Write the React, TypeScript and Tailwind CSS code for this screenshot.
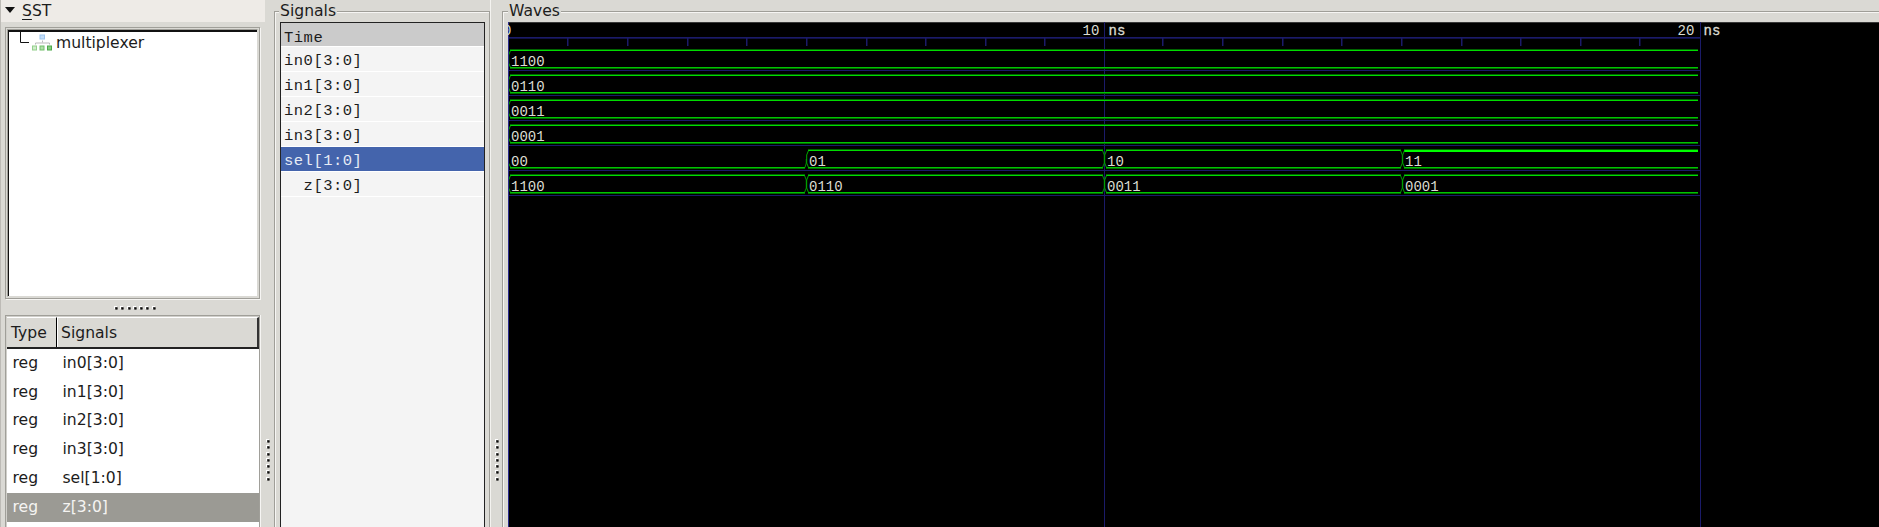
import React from "react";

const LEFT_ROWS = ["in0[3:0]", "in1[3:0]", "in2[3:0]", "in3[3:0]", "sel[1:0]", "z[3:0]"];
const NAMES = ["in0[3:0]", "in1[3:0]", "in2[3:0]", "in3[3:0]", "sel[1:0]", "  z[3:0]"];

type Segment = { from: number; to: number; value: string };
const END = 1191;
const full = (value: string): Segment[] => [{ from: 1, to: END, value }];
const WAVES: Segment[][] = [
  full("1100"),
  full("0110"),
  full("0011"),
  full("0001"),
  [
    { from: 1, to: 299, value: "00" },
    { from: 299, to: 597, value: "01" },
    { from: 597, to: 895, value: "10" },
    { from: 895, to: END, value: "11" },
  ],
  [
    { from: 1, to: 299, value: "1100" },
    { from: 299, to: 597, value: "0110" },
    { from: 597, to: 895, value: "0011" },
    { from: 895, to: END, value: "0001" },
  ],
];
const TICKS = [60, 120, 180, 239, 299, 359, 418, 478, 537, 655, 715, 775, 834, 894, 954, 1013, 1073, 1132];

function Dots({ vertical }: { vertical?: boolean }) {
  return (
    <div className={vertical ? "flex flex-col gap-[2.25px]" : "flex gap-[2.25px]"}>
      {Array.from({ length: 7 }, (_, i) => (
        <svg key={i} width="4" height="4" viewBox="0 0 4 4">
          <rect width="3" height="3" fill="#fff" />
          <rect x="1" y="1" width="2.500" height="2.500" fill="#6b6a67" />
          <rect x="1.500" y="1.500" width="2" height="2" fill="#0c0c0c" />
        </svg>
      ))}
    </div>
  );
}

function Frame({ title, open, children }: { title: string; open?: boolean; children: React.ReactNode }) {
  return (
    <section
      className={
        "relative mt-[11px] flex min-w-0 flex-1 border-t border-l border-[#9f9e98] " + (open ? "" : "border-r")
      }
    >
      <div
        className={
          "flex min-w-0 flex-1 border-t border-l border-[#f6f5f3] pt-[9px] " + (open ? "pl-[4px]" : "px-[4px]")
        }
      >
        {children}
      </div>
      <h2
        className={
          "absolute -top-[11px] bg-[#dad9d4] px-px text-[15.6px] leading-[20px] " + (open ? "left-[5px]" : "left-[4px]")
        }
      >
        {title}
      </h2>
    </section>
  );
}

function TreeIcon() {
  return (
    <svg width="21" height="17" viewBox="0 0 21 17" className="mt-[2px] ml-[3px] shrink-0">
      <path d="M10.500 6.500v2M3.500 10.500V9h14v1.500" fill="none" stroke="#b9b9b9" />
      <rect x="8" y="1" width="4.500" height="4" fill="#c4def8" stroke="#9cc4ee" />
      <rect x=".5" y="12" width="4" height="4" fill="#d0ecca" stroke="#93cf8c" />
      <rect x="8" y="12" width="4" height="4" fill="#b0e0a9" stroke="#72c06b" />
      <rect x="15.500" y="12" width="4" height="4" fill="#86cd80" stroke="#4da94a" />
    </svg>
  );
}

function Bus({ seg, y, binary }: { seg: Segment; y: number; binary: boolean }) {
  const a = seg.from;
  const last = seg.to === END;
  const b = last ? seg.to - 1 : seg.to - 2;
  const low = binary && seg.value === "00";
  const high = binary && seg.value === "11";
  const x = a + 1;
  return (
    <g>
      {!low && <rect x={x} y={y - 1} width={b - x} height="1" fill="#006400" />}
      {!low && <rect x={x} y={y} width={b - x} height="1" fill="#00dc00" />}
      {high && <rect x={x} y={y} width={b - x} height="2" fill="#00ff00" />}
      <rect x={x} y={y + 17} width={b - x} height="1" fill="#00c400" />
      <rect x={x} y={y + 18} width={b - x} height="1" fill="#006e00" />
      <path
        d={
          low
            ? `M${a - 0.5} ${y + 5}V${y + 13}L${x + 0.5} ${y + 17}`
            : `M${x + 0.5} ${y + 0.5}L${a - 0.3} ${y + 5}V${y + 13}L${x + 0.5} ${y + 17.5}`
        }
        fill="none"
        stroke="#00a800"
      />
      {!last && (
        <path
          d={
            low
              ? `M${b} ${y + 17.5}L${b + 1.3} ${y + 13}V${y + 9}`
              : `M${b - 0.5} ${y + 0.5}L${b + 1.3} ${y + 5}V${y + 13}L${b - 0.5} ${y + 17.5}`
          }
          fill="none"
          stroke="#009600"
        />
      )}
      <text x={a + 2} y={y + 15.7} fill="#dcdcd2">
        {seg.value}
      </text>
    </g>
  );
}

function Waves() {
  return (
    <svg
      width="1376"
      height="505"
      viewBox="0 0 1376 505"
      className="shrink-0 bg-black font-['Liberation_Mono',monospace] text-[14px]"
    >
      <rect width="1376" height="1" fill="#383838" />
      <g fill="#1b1b69">
        <rect x="0" y="15" width="1192" height="1" />
        <rect x="0" y="16" width="1192" height="1" fill="#111147" />
        {TICKS.map((x) => (
          <rect key={x} x={x - 1} y="16" width="1.500" height="8" />
        ))}
        {WAVES.map((_, i) => (
          <rect key={i} x="0" y={48 + i * 25} width="1192" height="1" />
        ))}
        <rect x="596" width="1" height="505" />
        <rect x="1192" width="1" height="505" />
      </g>
      {WAVES.map((segs, i) =>
        segs.map((s) => <Bus key={`${i}-${s.from}`} seg={s} y={28 + i * 25} binary={i === 4} />),
      )}
      <rect x="0" width="1" height="505" fill="#2a2a8c" />
      <text x="-5" y="13" fill="#dcdcd2">0</text>
      <text x="574.500" y="13" fill="#dcdcd2">10</text>
      <text x="600.500" y="13" fill="#dcdcd2" stroke="#dcdcd2" strokeWidth=".3">ns</text>
      <text x="1169.500" y="13" fill="#dcdcd2">20</text>
      <text x="1195.500" y="13" fill="#dcdcd2" stroke="#dcdcd2" strokeWidth=".3">ns</text>
    </svg>
  );
}

export default function App() {
  return (
    <main className="flex h-[527px] w-full overflow-hidden bg-[#dad9d4] font-['DejaVu_Sans',sans-serif] text-[15.6px] text-[#1c1c1c]">
      <aside className="flex w-[265px] shrink-0 flex-col border-l border-[#bdbbb6]">
        <header className="flex h-[22px] shrink-0 items-center bg-[#eeebe7] pl-[4px]">
          <svg width="10" height="6" viewBox="0 0 10 6" className="-mt-[2px]">
            <path d="M0 0H10L5 6Z" fill="#111" />
          </svg>
          <span className="ml-[7px] leading-[20px]">
            <span className="underline underline-offset-3">S</span>ST
          </span>
        </header>
        <div className="mt-[5px] ml-[4px] h-[272px] w-[255px] shrink-0 border border-[#a09f99] p-px shadow-[1px_1px_0_#f6f5f3]">
          <div className="h-full border border-t-[#a09f99] border-r-[#dad9d4] border-b-[#dad9d4] border-l-[#a09f99]">
            <div className="flex h-full border-t-2 border-l border-[#111] bg-white">
              <svg width="20" height="12" viewBox="0 0 20 12" className="shrink-0">
                <path d="M11.500 0V10.500H20" fill="none" stroke="#111" />
              </svg>
              <TreeIcon />
              <span className="ml-[3px] leading-[23px]">multiplexer</span>
            </div>
          </div>
        </div>
        <div className="flex h-[16px] shrink-0 items-center pt-[2px] pl-[113px]">
          <Dots />
        </div>
        <div className="ml-[4px] flex w-[255px] flex-1 flex-col border-x border-t border-[#a09f99] shadow-[1px_0_0_#f6f5f3]">
          <div className="flex min-h-0 flex-1 flex-col border-t border-l border-[#d0cfca] bg-white">
            <div className="flex h-[32px] shrink-0 border-b-2 border-[#222] bg-[#dad9d4] leading-[31px]">
              <div className="w-[50px] border-t border-r border-t-white border-r-black pl-[4px]">Type</div>
              <div className="flex-1 border-t border-r-2 border-l border-t-white border-r-[#333] border-l-white pl-[3px]">
                Signals
              </div>
            </div>
            {LEFT_ROWS.map((name, i) => (
              <div
                key={name}
                className={
                  "flex h-[28.800px] shrink-0 items-center pl-[5.500px] " +
                  (i === 5 ? "bg-[#9b9a94] text-[#f5f4f2]" : "")
                }
              >
                <span className="w-[50px]">reg</span>
                <span>{name}</span>
              </div>
            ))}
          </div>
        </div>
      </aside>
      <div className="flex w-[9px] shrink-0 pt-[439px] pl-[1px]">
        <Dots vertical />
      </div>
      <div className="flex w-[216px] shrink-0">
        <Frame title="Signals">
          <div className="flex flex-1 flex-col border-x border-t border-[#222] bg-[#f4f4f4] font-['Liberation_Mono',monospace] text-[15.5px] leading-[28px] tracking-[0.5px] whitespace-pre">
            <div className="h-[24px] shrink-0 border-b border-white bg-[#cbcbcb] pl-[3px] leading-[31px]">Time</div>
            {NAMES.map((name, i) => (
              <div
                key={name}
                className={
                  "h-[25px] shrink-0 border-b border-white pl-[3px] " + (i === 4 ? "bg-[#4464ac] text-[#e6ebf5]" : "")
                }
              >
                {name}
              </div>
            ))}
          </div>
        </Frame>
      </div>
      <div className="flex w-[12px] shrink-0 border-l border-[#f4f3f0] pt-[439px] pl-[4px]">
        <Dots vertical />
      </div>
      <div className="flex min-w-0 flex-1">
        <Frame title="Waves" open>
          <Waves />
        </Frame>
      </div>
    </main>
  );
}
